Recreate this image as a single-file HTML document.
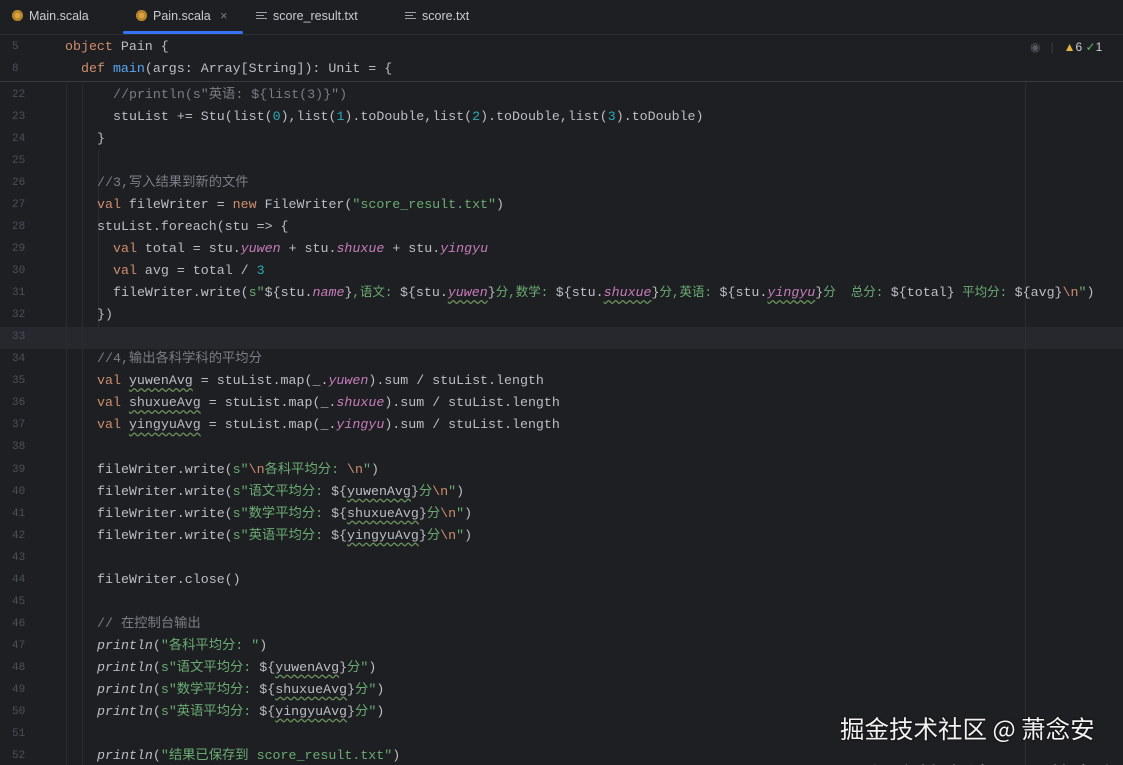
<!DOCTYPE html>
<html style="overflow:hidden;height:765px"><head><meta charset="utf-8"><style>
html,body{margin:0;padding:0;overflow:hidden;height:765px;background:#1e1f22}
#wrap{width:1123px;height:765px;background:#1e1f22;overflow:hidden;position:relative;font-family:"Liberation Mono","Noto Sans CJK SC",monospace;}
.tabs{position:absolute;left:0;top:0;width:1123px;height:34px;background:#1e1f22;border-bottom:1px solid #2b2d30;font-family:"Liberation Sans",sans-serif;font-size:12.5px;color:#c9ccd2}
.tab{position:absolute;top:9px}
.ico{display:inline-block;width:11px;height:11px;border-radius:50%;background:#d9a343;vertical-align:-1px;margin-right:6px;box-shadow:inset 0 0 0 2.5px #b3832a}
.txt{display:inline-block;width:11px;vertical-align:0;margin-right:6px;border-top:1.5px solid #9ea2a8;height:7px;position:relative}
.txt:before,.txt:after{content:"";position:absolute;left:0;width:8px;border-top:1.5px solid #9ea2a8}
.txt:before{top:2px}.txt:after{top:5px;width:11px}
.ul{position:absolute;left:123px;top:31px;width:120px;height:3px;background:#3574f0;border-radius:2px}
.sticky{position:absolute;left:0;top:35px;width:1123px;height:46px;border-bottom:1px solid #393b40;background:#1e1f22}
.ln{position:absolute;left:0;width:50px;text-align:left;padding-left:12px;color:#4b5059;font-size:11px}
.l{position:absolute;height:22px;line-height:22px;font-size:13.3px;color:#bcbec4;white-space:pre}
.l .z{font-size:12.5px}
.k{color:#cf8e6d}.s{color:#6aab73}.c{color:#7a7e85}.n{color:#2aacb8}.f{color:#c77dbb;font-style:italic}.m{color:#56a8f5}.i{font-style:italic}
.w{text-decoration:underline wavy #6a8f5a;text-underline-offset:3px}
.hl{position:absolute;left:0;top:327px;width:1123px;height:22px;background:#26282e}
.vr{position:absolute;top:35px;bottom:0;width:1px;background:#2b2d30}
.ig{position:absolute;top:84px;bottom:0;width:1px;background:#2a2c30}
.wm{position:absolute;left:840px;top:711px;font-family:"Noto Sans CJK SC",sans-serif;font-size:24.5px;color:#f2f2f2;text-shadow:0 0 2px #000;white-space:nowrap}
.wm2{position:absolute;left:870px;top:757px;font-family:"Noto Sans CJK SC",sans-serif;font-size:24px;color:#e8e8e8;white-space:nowrap}
</style></head><body><div id="wrap">
<div class="tabs">
<div class="tab" style="left:12px"><span class="ico"></span>Main.scala</div>
<div class="tab" style="left:136px"><span class="ico"></span>Pain.scala <span style="color:#7a7e85;margin-left:6px">×</span></div>
<div class="tab" style="left:256px"><span class="txt"></span>score_result.txt</div>
<div class="tab" style="left:405px"><span class="txt"></span>score.txt</div>
<div class="ul"></div>
</div>
<div class="hl"></div>
<div class="vr" style="left:1025px"></div>
<div class="ig" style="left:66px"></div>
<div class="ig" style="left:82px"></div>
<div class="ig" style="left:98px;top:150px;bottom:437px"></div>
<div class="sticky">
<div class="ln" style="top:1px;line-height:22px">5</div>
<div class="ln" style="top:23px;line-height:22px">8</div>
<div class="l" style="left:65px;top:1px"><span class="k">object</span> Pain {</div>
<div class="l" style="left:81px;top:23px"><span class="k">def</span> <span class="m">main</span>(args: Array[String]): Unit = {</div>
<div style="position:absolute;left:1030px;top:5px;font-family:'Liberation Sans',sans-serif;font-size:12px;color:#c9ccd2"><span style="color:#55585e">◉</span><span style="color:#393b40;margin:0 10px">|</span><span style="color:#e5b53c">▲</span>6 <span style="color:#5fb865">✓</span>1</div>
</div>
<div id="code"></div>
<div class="wm">掘金技术社区 @ 萧念安</div>
<div class="wm2">掘金技术社区 @ 萧念安</div>
</div>
<script>
var L={
22:[113,'<span class="c">//println(s"英语: ${list(3)}")</span>'],
23:[113,'stuList += Stu(list(<span class="n">0</span>),list(<span class="n">1</span>).toDouble,list(<span class="n">2</span>).toDouble,list(<span class="n">3</span>).toDouble)'],
24:[97,'}'],25:[0,''],
26:[97,'<span class="c">//3,写入结果到新的文件</span>'],
27:[97,'<span class="k">val</span> fileWriter = <span class="k">new</span> FileWriter(<span class="s">"score_result.txt"</span>)'],
28:[97,'stuList.foreach(stu => {'],
29:[113,'<span class="k">val</span> total = stu.<span class="f">yuwen</span> + stu.<span class="f">shuxue</span> + stu.<span class="f">yingyu</span>'],
30:[113,'<span class="k">val</span> avg = total / <span class="n">3</span>'],
31:[113,'fileWriter.write(<span class="s">s"</span>${stu.<span class="f">name</span>}<span class="s z">,语文: </span>${stu.<span class="f w">yuwen</span>}<span class="s z">分,数学: </span>${stu.<span class="f w">shuxue</span>}<span class="s z">分,英语: </span>${stu.<span class="f w">yingyu</span>}<span class="s z">分  总分: </span>${total}<span class="s z"> 平均分: </span>${avg}<span class="k">\\n</span><span class="s">"</span>)'],
32:[97,'})'],33:[0,''],
34:[97,'<span class="c">//4,输出各科学科的平均分</span>'],
35:[97,'<span class="k">val</span> <span class="w">yuwenAvg</span> = stuList.map(_.<span class="f">yuwen</span>).sum / stuList.length'],
36:[97,'<span class="k">val</span> <span class="w">shuxueAvg</span> = stuList.map(_.<span class="f">shuxue</span>).sum / stuList.length'],
37:[97,'<span class="k">val</span> <span class="w">yingyuAvg</span> = stuList.map(_.<span class="f">yingyu</span>).sum / stuList.length'],
38:[0,''],
39:[97,'fileWriter.write(<span class="s">s"</span><span class="k">\\n</span><span class="s">各科平均分: </span><span class="k">\\n</span><span class="s">"</span>)'],
40:[97,'fileWriter.write(<span class="s">s"语文平均分: </span>${<span class="w">yuwenAvg</span>}<span class="s">分</span><span class="k">\\n</span><span class="s">"</span>)'],
41:[97,'fileWriter.write(<span class="s">s"数学平均分: </span>${<span class="w">shuxueAvg</span>}<span class="s">分</span><span class="k">\\n</span><span class="s">"</span>)'],
42:[97,'fileWriter.write(<span class="s">s"英语平均分: </span>${<span class="w">yingyuAvg</span>}<span class="s">分</span><span class="k">\\n</span><span class="s">"</span>)'],
43:[0,''],
44:[97,'fileWriter.close()'],45:[0,''],
46:[97,'<span class="c">// 在控制台输出</span>'],
47:[97,'<span class="i">println</span>(<span class="s">"各科平均分: "</span>)'],
48:[97,'<span class="i">println</span>(<span class="s">s"语文平均分: </span>${<span class="w">yuwenAvg</span>}<span class="s">分"</span>)'],
49:[97,'<span class="i">println</span>(<span class="s">s"数学平均分: </span>${<span class="w">shuxueAvg</span>}<span class="s">分"</span>)'],
50:[97,'<span class="i">println</span>(<span class="s">s"英语平均分: </span>${<span class="w">yingyuAvg</span>}<span class="s">分"</span>)'],
51:[0,''],
52:[97,'<span class="i">println</span>(<span class="s">"结果已保存到 score_result.txt"</span>)']
};
var h='';
for(var n=22;n<=52;n++){var t=84+(n-22)*22.03;
h+='<div class="ln" style="top:'+t+'px;line-height:22px">'+n+'</div>';
if(L[n][0])h+='<div class="l" style="left:'+L[n][0]+'px;top:'+t+'px">'+L[n][1]+'</div>';}
document.getElementById('code').innerHTML=h;
</script>
</body></html>
